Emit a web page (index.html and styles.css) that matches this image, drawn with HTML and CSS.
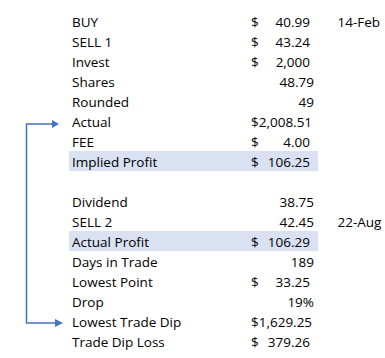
FILE: index.html
```html
<!DOCTYPE html>
<html>
<head>
<meta charset="utf-8">
<link rel="stylesheet" href="styles.css">
</head>
<body>
<div class="sheet">
  <div class="row"><span></span><span class="label">BUY</span><span class="val acc"><span>$</span><span>40.99</span></span><span class="date">14-Feb</span></div>
  <div class="row"><span></span><span class="label">SELL 1</span><span class="val acc"><span>$</span><span>43.24</span></span><span class="date"></span></div>
  <div class="row"><span></span><span class="label">Invest</span><span class="val acc"><span>$</span><span>2,000</span></span><span class="date"></span></div>
  <div class="row"><span></span><span class="label">Shares</span><span class="val plain"><span>48.79</span></span><span class="date"></span></div>
  <div class="row"><span></span><span class="label">Rounded</span><span class="val plain"><span>49</span></span><span class="date"></span></div>
  <div class="row"><span></span><span class="label">Actual</span><span class="val acc"><span>$</span><span>2,008.51</span></span><span class="date"></span></div>
  <div class="row"><span></span><span class="label">FEE</span><span class="val acc"><span>$</span><span>4.00</span></span><span class="date"></span></div>
  <div class="row hl"><span></span><span class="label">Implied Profit</span><span class="val acc"><span>$</span><span>106.25</span></span><span class="date"></span></div>
  <div class="row"><span></span><span class="label"></span><span class="val"></span><span class="date"></span></div>
  <div class="row"><span></span><span class="label">Dividend</span><span class="val plain"><span>38.75</span></span><span class="date"></span></div>
  <div class="row"><span></span><span class="label">SELL 2</span><span class="val plain"><span>42.45</span></span><span class="date">22-Aug</span></div>
  <div class="row hl"><span></span><span class="label">Actual Profit</span><span class="val acc"><span>$</span><span>106.29</span></span><span class="date"></span></div>
  <div class="row"><span></span><span class="label">Days in Trade</span><span class="val plain"><span>189</span></span><span class="date"></span></div>
  <div class="row"><span></span><span class="label">Lowest Point</span><span class="val acc"><span>$</span><span>33.25</span></span><span class="date"></span></div>
  <div class="row"><span></span><span class="label">Drop</span><span class="val plain"><span>19%</span></span><span class="date"></span></div>
  <div class="row"><span></span><span class="label">Lowest Trade Dip</span><span class="val acc"><span>$</span><span>1,629.25</span></span><span class="date"></span></div>
  <div class="row"><span></span><span class="label">Trade Dip Loss</span><span class="val acc"><span>$</span><span>379.26</span></span><span class="date"></span></div>
  <svg class="connector" width="385" height="358" viewBox="0 0 385 358">
    <path d="M53 124 H26.5 V323 H56" fill="none" stroke="#4472C4" stroke-width="1.5"/>
    <polygon points="52,120 59,124 52,128" fill="#4472C4"/>
    <polygon points="55,319 63,323 55,327" fill="#4472C4"/>
  </svg>
</div>
</body>
</html>
```
FILE: styles.css
```css
html, body {
  margin: 0;
  padding: 0;
  background: #ffffff;
}
.sheet {
  position: relative;
  width: 385px;
  height: 358px;
  padding-top: 11px;
  box-sizing: border-box;
  font-family: "Open Sans", "Liberation Sans", sans-serif;
  font-size: 13.5px;
  color: #000000;
}
.row {
  display: grid;
  grid-template-columns: 69px 179px 70px 1fr;
  height: 20px;
}
.row > span {
  box-sizing: border-box;
  height: 20px;
  padding-top: 2px;
  line-height: 18px;
  white-space: nowrap;
}
.label {
  padding-left: 3px;
}
.val {
  display: flex;
  padding-left: 3px;
}
.val.acc {
  justify-content: space-between;
  padding-right: 8px;
}
.val.plain {
  justify-content: flex-end;
  padding-right: 4px;
}
.date {
  padding-left: 19.5px;
}
.row.hl .label,
.row.hl .val {
  background: #d9e1f2;
}
.connector {
  position: absolute;
  top: 0;
  left: 0;
  pointer-events: none;
}
```
